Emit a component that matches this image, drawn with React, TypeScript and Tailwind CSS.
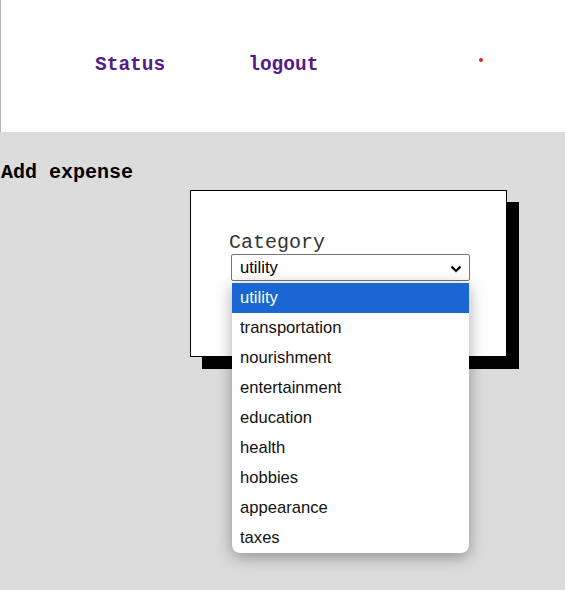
const categories = [
  'utility',
  'transportation',
  'nourishment',
  'entertainment',
  'education',
  'health',
  'hobbies',
  'appearance',
  'taxes',
];

function Header() {
  return (
    <div className="relative flex h-[132px] items-center border-l border-[#b8b8b8] bg-white pl-[94px] font-['Courier_New','Liberation_Mono',monospace] text-[19.5px] font-bold text-[#551a8b]">
      <a>Status</a>
      <a className="ml-[83px]">logout</a>
      <span className="absolute left-[478px] top-[58px] h-[4px] w-[4px] rounded-full bg-[#e0202a]" />
    </div>
  );
}

function CategoryPicker() {
  return (
    <div className="relative">
      <div className="font-['Courier_New','Liberation_Mono',monospace] text-[20px] leading-[20px] text-[#333]">
        Category
      </div>
      <div className="ml-[2px] mt-[1px] flex h-[27px] w-[239px] items-center justify-between rounded-[2px] border border-[#767676] bg-white pl-[8px] pr-[6px] pt-[2px] font-['Liberation_Sans',Arial,sans-serif] text-[16.6px] text-black">
        <span>utility</span>
        <svg width="12" height="8" viewBox="0 0 12 8" className="mr-[1px]">
          <path d="M1.5 1.5 L6 6 L10.5 1.5" fill="none" stroke="black" strokeWidth="2.2" />
        </svg>
      </div>
      <ul className="absolute left-[3px] top-[50px] z-10 w-[237px] overflow-hidden rounded-b-[8px] bg-white font-['Liberation_Sans',Arial,sans-serif] text-[16.6px] text-[#111] shadow-[0_4px_16px_rgba(0,0,0,0.35)]">
        {categories.map((c, i) => (
          <li
            key={c}
            className={
              i === 0
                ? 'flex h-[30px] items-center bg-[#1967d2] pl-[8px] text-white'
                : 'flex h-[30px] items-center pl-[8px]'
            }
          >
            {c}
          </li>
        ))}
      </ul>
    </div>
  );
}

export default function App() {
  return (
    <div className="min-h-[590px] bg-[#dcdcdc]">
      <Header />
      <h3 className="pl-[1px] pt-[30px] font-['Courier_New','Liberation_Mono',monospace] text-[20px] font-bold leading-[22px] text-black">
        Add expense
      </h3>
      <div className="ml-[190px] mt-[6px] h-[167px] w-[317px] border border-black bg-white pl-[38px] pt-[42px] shadow-[12px_12px_0_#000]">
        <CategoryPicker />
      </div>
    </div>
  );
}
